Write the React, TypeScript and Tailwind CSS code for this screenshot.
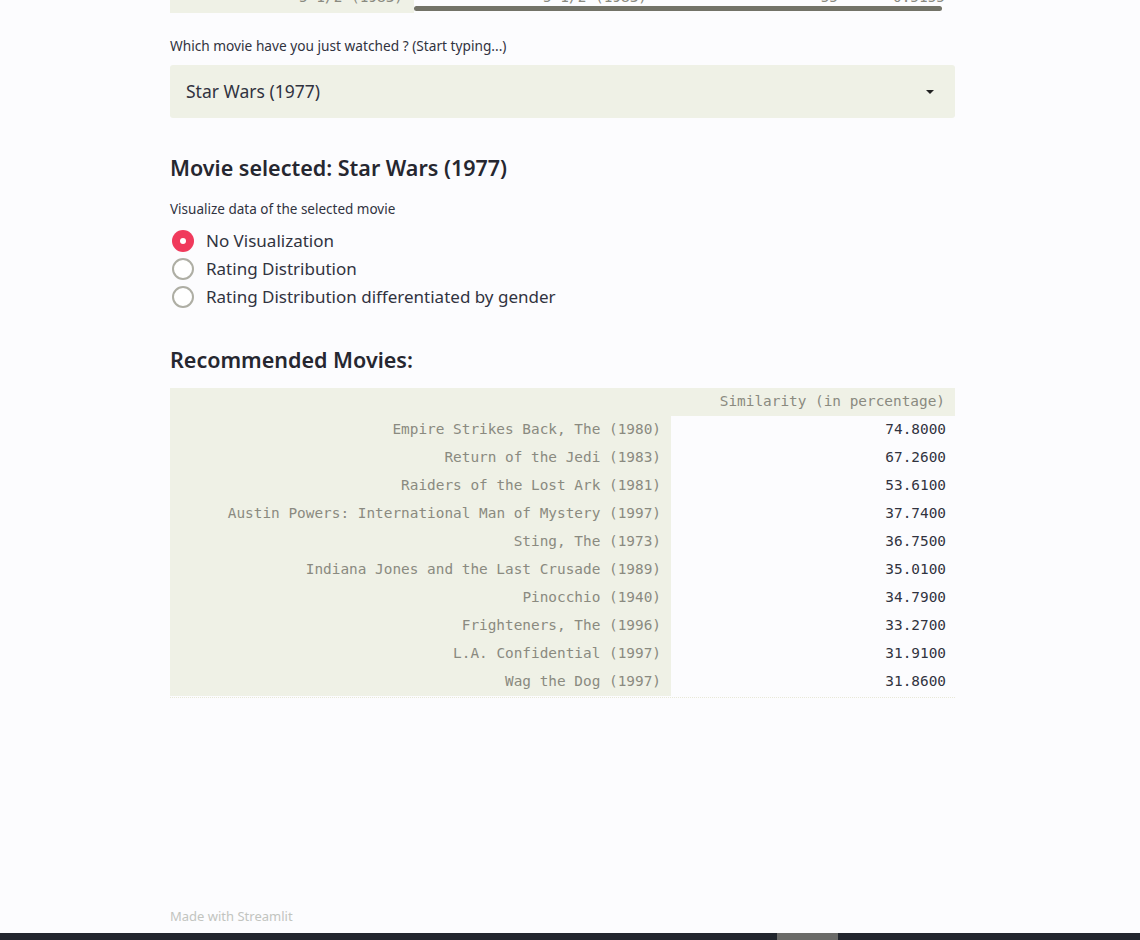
import React from "react";

const sans = { fontFamily: '"Noto Sans", "Open Sans", sans-serif' };
const mono = { fontFamily: '"DejaVu Sans Mono", "Liberation Mono", monospace' };

const recs: [string, string][] = [
  ["Empire Strikes Back, The (1980)", "74.8000"],
  ["Return of the Jedi (1983)", "67.2600"],
  ["Raiders of the Lost Ark (1981)", "53.6100"],
  ["Austin Powers: International Man of Mystery (1997)", "37.7400"],
  ["Sting, The (1973)", "36.7500"],
  ["Indiana Jones and the Last Crusade (1989)", "35.0100"],
  ["Pinocchio (1940)", "34.7900"],
  ["Frighteners, The (1996)", "33.2700"],
  ["L.A. Confidential (1997)", "31.9100"],
  ["Wag the Dog (1997)", "31.8600"],
];

const options = [
  "No Visualization",
  "Rating Distribution",
  "Rating Distribution differentiated by gender",
];

function Radio({ checked }: { checked: boolean }) {
  if (checked)
    return (
      <span className="flex h-[22px] w-[22px] shrink-0 items-center justify-center rounded-full bg-[#f03a5c]">
        <span className="h-[6px] w-[6px] rounded-full bg-white" />
      </span>
    );
  return <span className="h-[22px] w-[22px] shrink-0 rounded-full border-2 border-[#aeaea4] bg-white" />;
}

export default function App() {
  return (
    <div className="flex h-[940px] w-[1140px] flex-col overflow-hidden bg-[#fcfcfe]" style={sans}>
      <div className="ml-[170px] flex w-[785px] flex-1 flex-col">
        {/* tail of the previous table, scrolled off the top */}
        <div className="relative h-[13px] overflow-hidden" style={mono}>
          <div className="flex h-[13px]">
            <div className="w-[244px] bg-[#eff1e6]" />
            <div className="flex-1" />
          </div>
          <div className="absolute -top-[13px] left-0 flex w-full text-[14.4px] leading-[20px] text-[#8a8a80]">
            <span className="w-[233px] text-right">5 1/2 (1983)</span>
            <span className="w-[244px] text-right">5 1/2 (1983)</span>
            <span className="w-[191px] text-right">55</span>
            <span className="w-[107px] text-right">0.5155</span>
          </div>
          <div className="absolute left-[244px] top-[6px] h-[5px] w-[528px] rounded-full bg-[#737368]" />
        </div>

        <div className="mt-[25px] text-[13.7px] leading-[16px] text-[#31333f]">
          Which movie have you just watched ? (Start typing...)
        </div>
        <div className="mt-[11px] flex h-[53px] items-center justify-between rounded-[3px] bg-[#eff1e6] pl-4 pr-5">
          <span className="text-[17.5px] text-[#31333f]">Star Wars (1977)</span>
          <svg width="10" height="6" viewBox="0 0 10 6">
            <path d="M1 1h8L5 5z" fill="#222" />
          </svg>
        </div>

        <h2 className="mt-[36px] text-[21.5px] font-semibold leading-[28px] text-[#262730]">
          Movie selected: Star Wars (1977)
        </h2>
        <div className="mt-[19px] text-[13.5px] leading-[16px] text-[#31333f]">
          Visualize data of the selected movie
        </div>
        <div className="mt-[10px] flex flex-col">
          {options.map((o, i) => (
            <div key={o} className="flex h-[28px] items-center gap-[12px] pl-[2px]">
              <Radio checked={i === 0} />
              <span className="text-[17px] text-[#31333f]">{o}</span>
            </div>
          ))}
        </div>

        <h2 className="mt-[35px] text-[21.5px] font-semibold leading-[28px] text-[#262730]">
          Recommended Movies:
        </h2>
        <div className="mt-[14px] flex flex-col text-[14.4px]" style={mono}>
          <div className="flex h-[28px] items-center justify-end bg-[#eff1e6] pr-[10px] text-[#8a8a80]">
            Similarity (in percentage)
          </div>
          {recs.map(([title, sim]) => (
            <div key={title} className="flex h-[28px]">
              <div className="flex w-[501px] items-center justify-end bg-[#eff1e6] pr-[10px] text-[#8a8a80]">
                {title}
              </div>
              <div className="flex flex-1 items-center justify-end pr-[9px] text-[#31333f]">{sim}</div>
            </div>
          ))}
          <div className="h-[2px] border-b border-dotted border-[#e8e8d8]" />
        </div>

        <div className="mt-auto pb-[9px] text-[13px] leading-[16px] text-[#c2c4c0]">Made with Streamlit</div>
      </div>
      <div className="flex h-[7px] bg-[#22262e]">
        <div className="w-[777px]" />
        <div className="w-[61px] bg-[#6a6a68]" />
      </div>
    </div>
  );
}
